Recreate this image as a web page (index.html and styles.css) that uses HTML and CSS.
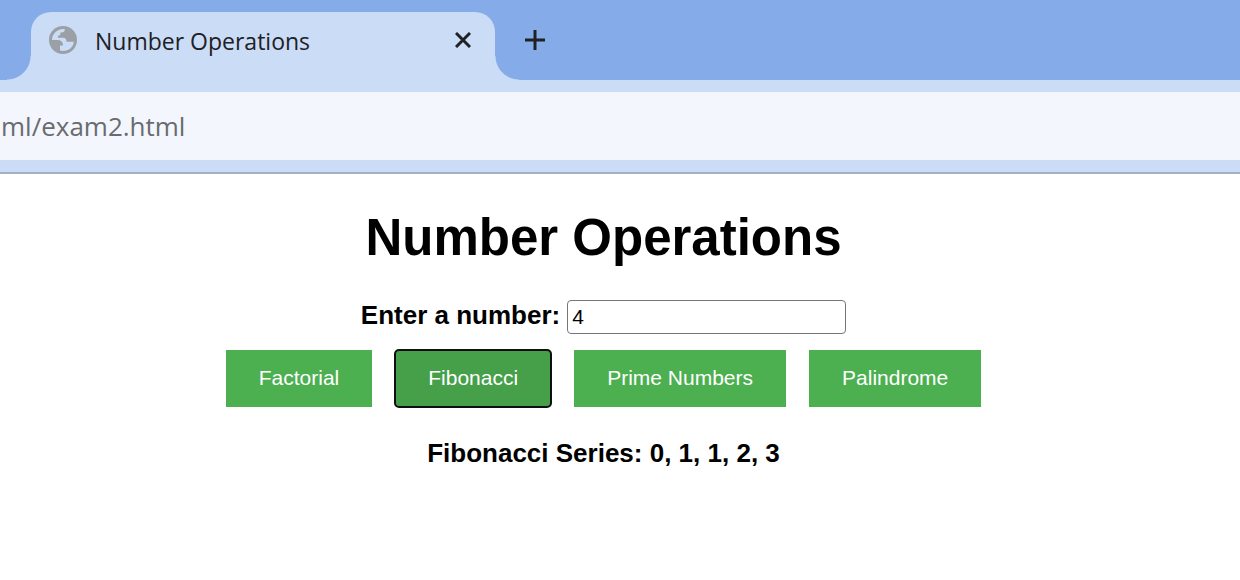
FILE: index.html
```html
<!DOCTYPE html>
<html lang="en">
<head>
<meta charset="utf-8">
<title>Number Operations</title>
<link rel="stylesheet" href="styles.css">
</head>
<body>
<header class="browser">
  <div class="tab-strip">
    <div class="tab">
      <svg class="globe" viewBox="0 0 28 28" aria-hidden="true">
        <circle cx="14" cy="14" r="14" fill="#9aa0a6"/>
        <path fill="#cbdcf6" d="M3 14C3 8 8 3 14 3H15.800C15.800 5.500 15 6.300 13 6.300C11.300 6.300 10.800 7.500 11.500 9C9.500 9 8.800 10 8.800 11.700H14C16.500 11.700 17.300 13 17.600 15.700H24.900C24.200 21 20 25 14 25C12.800 25 11.800 24.900 11 24.600V19.500H14C14 16 12 14 8 14Z"/>
      </svg>
      <span class="tab-title">Number Operations</span>
      <button class="icon-button" type="button" aria-label="Close tab">
        <svg class="close" viewBox="0 0 16 16" aria-hidden="true"><path d="M1 1L15 15M15 1L1 15"/></svg>
      </button>
    </div>
    <button class="icon-button new-tab" type="button" aria-label="New tab">
      <svg class="plus" viewBox="0 0 20 20" aria-hidden="true"><path d="M10 0V20M0 10H20"/></svg>
    </button>
  </div>
  <div class="address-bar">ml/exam2.html</div>
</header>
<main class="page">
  <h1 class="heading">Number Operations</h1>
  <div class="field">
    <label for="number">Enter a number:</label>
    <input class="number" id="number" type="text" value="4">
  </div>
  <div class="actions">
    <button class="action" type="button">Factorial</button>
    <button class="action action-focused" type="button">Fibonacci</button>
    <button class="action" type="button">Prime Numbers</button>
    <button class="action" type="button">Palindrome</button>
  </div>
  <p class="result">Fibonacci Series: 0, 1, 1, 2, 3</p>
</main>
</body>
</html>
```
FILE: styles.css
```css
* { box-sizing: border-box; }
body {
  margin: 0;
  background: #fff;
  color: #000;
  font-family: "Liberation Sans", Arial, sans-serif;
}
.browser {
  background: #cbdcf6;
  padding-bottom: 12px;
  border-bottom: 2px solid #a5b0c8;
  font-family: "Open Sans", "Noto Sans", sans-serif;
}
.tab-strip {
  display: flex;
  align-items: flex-start;
  padding: 12px 0 0 31px;
  background: #85ace9;
}
.tab {
  position: relative;
  display: flex;
  align-items: center;
  width: 464px;
  height: 68px;
  padding: 0 24px 12px 18px;
  border-radius: 20px 20px 0 0;
  background: #cbdcf6;
}
.tab::before,
.tab::after {
  content: "";
  position: absolute;
  bottom: 0;
  width: 24px;
  height: 24px;
}
.tab::before {
  right: 100%;
  background: radial-gradient(circle at 0 0, #85ace9 23px, #cbdcf6 24px);
}
.tab::after {
  left: 100%;
  background: radial-gradient(circle at 100% 0, #85ace9 23px, #cbdcf6 24px);
}
.globe {
  width: 28px;
  height: 28px;
  margin-right: 18px;
}
.tab-title {
  flex: 1;
  padding-top: 2px;
  color: #202124;
  font-size: 23px;
  line-height: 32px;
}
.icon-button {
  display: flex;
  padding: 0;
  border: 0;
  background: none;
}
.new-tab { margin: 18px 0 0 30px; }
.close, .plus {
  fill: none;
  stroke: #202124;
  stroke-width: 3;
}
.close { width: 16px; height: 16px; }
.plus { width: 20px; height: 20px; }
.address-bar {
  margin-top: 12px;
  padding: 16px 1px;
  background: #f3f7fd;
  color: #696b6f;
  font-size: 26px;
  line-height: 36px;
}
.page {
  padding: 33px 33px 32px 0;
  text-align: center;
}
.heading {
  margin: 0 0 31px;
  font-size: 51px;
  line-height: 62px;
}
.field {
  display: flex;
  justify-content: center;
  align-items: flex-start;
  gap: 7px;
  font-size: 26px;
  font-weight: bold;
  line-height: 30px;
}
.number {
  width: 279px;
  height: 34px;
  padding: 0 4px;
  border: 1px solid #767676;
  border-radius: 4px;
  background: #fff;
  font-family: inherit;
  font-size: 21px;
}
.actions {
  display: flex;
  justify-content: center;
  gap: 23px;
  margin-top: 16px;
}
.action {
  padding: 15px 33px 17px;
  border: 0;
  background: #4caf50;
  color: #fff;
  font-family: inherit;
  font-size: 21px;
  line-height: 25px;
}
.action-focused {
  border-radius: 4px;
  outline: 2px solid #101010;
  outline-offset: -1px;
  background: #45a049;
}
.result {
  margin: 31px 0 0;
  font-size: 26px;
  font-weight: bold;
  line-height: 30px;
}
```
